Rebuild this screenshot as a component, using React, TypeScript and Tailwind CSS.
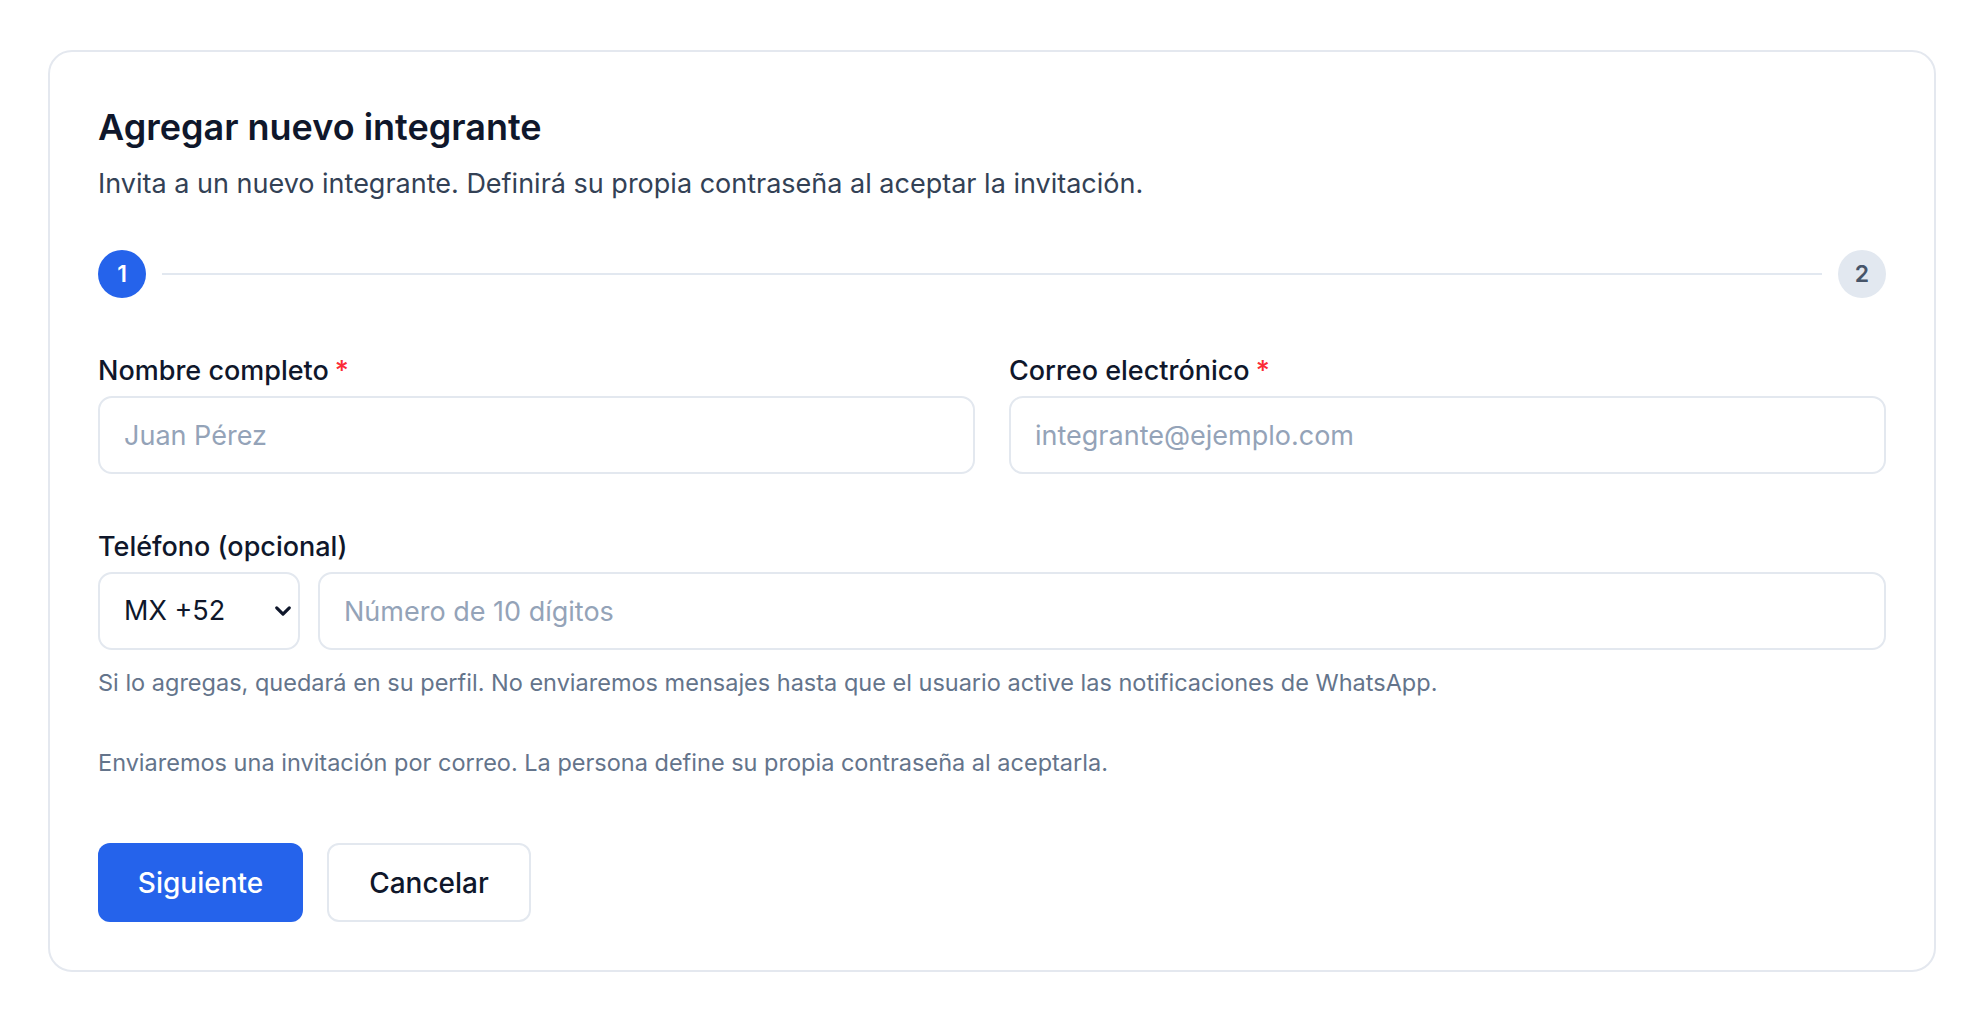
import React, { useState } from 'react'

const fieldBox =
  'h-[78px] w-full rounded-[14px] border-2 border-[#e3e8ef] bg-white px-6 text-[27px] text-slate-900 placeholder:text-[#94a3b8] outline-none'

const Label = ({ text, required }: { text: string; required?: boolean }) => (
  <label className="mb-[9px] block text-[27px] font-medium leading-[32px] text-slate-900">
    {text}
    {required && <span className="ml-1.5 text-red-500">*</span>}
  </label>
)

const Step = ({ n, active }: { n: number; active?: boolean }) => (
  <div
    className={`flex h-12 w-12 shrink-0 items-center justify-center rounded-full text-[23px] font-semibold ${
      active ? 'bg-[#2563eb] text-white' : 'bg-[#e2e8f0] text-[#475569]'
    }`}
  >
    {n}
  </div>
)

export default function App() {
  const [name, setName] = useState('')
  const [email, setEmail] = useState('')
  const [country, setCountry] = useState('+52')
  const [phone, setPhone] = useState('')

  return (
    <div className="min-h-screen bg-white px-12 pb-12 pt-[50px] font-['Inter',sans-serif]">
      <div className="rounded-[24px] border-2 border-[#e4e8ef] bg-white px-12 pb-12 pt-[55px]">
        <h1 className="text-[36px] font-semibold leading-[40px] text-slate-900">
          Agregar nuevo integrante
        </h1>
        <p className="mt-[21px] text-[27px] leading-[32px] text-[#334155]">
          Invita a un nuevo integrante. Definirá su propia contraseña al aceptar la invitación.
        </p>

        {/* stepper */}
        <div className="mt-[50px] flex items-center gap-4">
          <Step n={1} active />
          <div className="h-[2px] flex-1 bg-[#e2e8f0]" />
          <Step n={2} />
        </div>

        <div className="mt-[57px] grid grid-cols-2 gap-x-[34px]">
          <div>
            <Label text="Nombre completo" required />
            <input
              className={fieldBox}
              placeholder="Juan Pérez"
              value={name}
              onChange={(e) => setName(e.target.value)}
            />
          </div>
          <div>
            <Label text="Correo electrónico" required />
            <input
              className={fieldBox}
              placeholder="integrante@ejemplo.com"
              value={email}
              onChange={(e) => setEmail(e.target.value)}
            />
          </div>
        </div>

        <div className="mt-[57px]">
          <Label text="Teléfono (opcional)" />
          <div className="flex gap-[18px]">
            <div className="relative w-[202px] shrink-0">
              <select
                className="h-[78px] w-full appearance-none rounded-[14px] border-2 border-[#e3e8ef] bg-white pl-6 pr-10 text-[27px] text-slate-900 outline-none"
                value={country}
                onChange={(e) => setCountry(e.target.value)}
              >
                <option value="+52">MX +52</option>
                <option value="+1">US +1</option>
                <option value="+34">ES +34</option>
              </select>
              <svg
                className="pointer-events-none absolute right-[8px] top-1/2 h-[13px] w-[18px] -translate-y-1/2 text-slate-900"
                viewBox="0 0 20 14"
                fill="none"
                stroke="currentColor"
                strokeWidth="3.5"
                strokeLinecap="round"
                strokeLinejoin="round"
              >
                <path d="M3 3.5l7 7 7-7" />
              </svg>
            </div>
            <input
              className={fieldBox}
              placeholder="Número de 10 dígitos"
              value={phone}
              onChange={(e) => setPhone(e.target.value)}
            />
          </div>
          <p className="mt-[19px] text-[23.5px] leading-[28px] text-[#64748b]">
            Si lo agregas, quedará en su perfil. No enviaremos mensajes hasta que el usuario active las notificaciones de WhatsApp.
          </p>
        </div>

        <p className="mt-[52px] text-[23.5px] leading-[28px] text-[#64748b]">
          Enviaremos una invitación por correo. La persona define su propia contraseña al aceptarla.
        </p>

        <div className="mt-[66px] flex gap-6">
          <button className="h-[79px] w-[205px] rounded-[12px] bg-[#2563eb] text-[28px] font-medium text-white">
            Siguiente
          </button>
          <button className="h-[79px] w-[204px] rounded-[12px] border-2 border-[#e3e8ef] bg-white text-[28px] font-medium text-slate-900">
            Cancelar
          </button>
        </div>
      </div>
    </div>
  )
}
